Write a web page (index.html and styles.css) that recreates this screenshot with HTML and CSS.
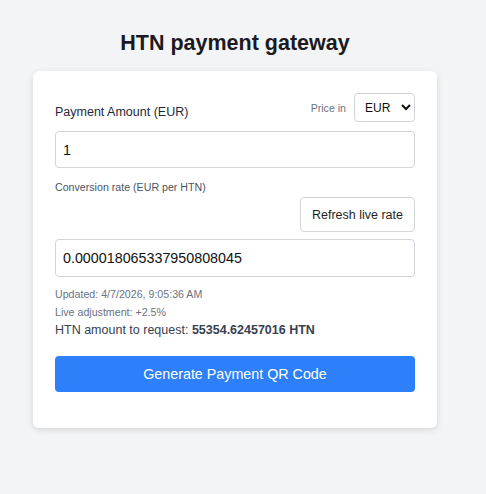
FILE: index.html
```html
<!DOCTYPE html>
<html lang="en">
<head>
<meta charset="utf-8">
<title>HTN payment gateway</title>
<link rel="stylesheet" href="styles.css">
</head>
<body>
<div class="page">
  <h1 class="title">HTN payment gateway</h1>
  <div class="card">
    <div class="head-row">
      <label class="field-label" for="amount">Payment Amount (EUR)</label>
      <div class="price-in">
        <span class="price-label">Price in</span>
        <select class="currency">
          <option>EUR</option>
          <option>USD</option>
        </select>
      </div>
    </div>
    <input id="amount" class="text-input" type="text" value="1">
    <div class="small-label">Conversion rate (EUR per HTN)</div>
    <div class="refresh-row">
      <button class="btn-outline" type="button">Refresh live rate</button>
    </div>
    <input class="text-input rate" type="text" value="0.000018065337950808045">
    <div class="meta">Updated: 4/7/2026, 9:05:36 AM</div>
    <div class="meta">Live adjustment: +2.5%</div>
    <div class="total">HTN amount to request: <strong>55354.62457016 HTN</strong></div>
    <button class="btn-primary" type="button">Generate Payment QR Code</button>
  </div>
</div>
</body>
</html>
```
FILE: styles.css
```css
* { box-sizing: border-box; }

html, body {
  margin: 0;
  background: #f3f4f6;
}

body {
  font-family: "Liberation Sans", Arial, sans-serif;
  color: #1f2937;
}

.page {
  width: 404px;
  margin-left: 33px;
  padding-top: 30px;
  padding-bottom: 40px;
}

.title {
  margin: 0 0 15px;
  font-size: 21.5px;
  line-height: 26px;
  font-weight: bold;
  text-align: center;
  color: #1b1b1f;
}

.card {
  background: #ffffff;
  border-radius: 6px;
  box-shadow: 0 2px 6px rgba(0, 0, 0, 0.12);
  padding: 22px 22px 36px;
}

.head-row {
  display: flex;
  justify-content: space-between;
  align-items: flex-end;
  height: 29px;
}

.field-label {
  font-size: 12.5px;
  line-height: 15px;
  margin-bottom: 2px;
  color: #1f2937;
}

.price-in {
  display: flex;
  align-items: center;
  gap: 8px;
}

.price-label {
  font-size: 10.6px;
  color: #6b7280;
}

.currency {
  width: 61px;
  height: 29px;
  font-family: "Liberation Sans", Arial, sans-serif;
  font-size: 12px;
  color: #111;
  background: #fff;
  border: 1px solid #d1d5db;
  border-radius: 4px;
  padding: 0 4px 0 6px;
}

.text-input {
  display: block;
  width: 100%;
  height: 37px;
  margin-top: 9px;
  padding: 0 7px;
  font-family: "Liberation Sans", Arial, sans-serif;
  font-size: 14.3px;
  color: #111;
  border: 1px solid #d1d5db;
  border-radius: 4px;
  background: #fff;
}

.text-input.rate {
  height: 38px;
  margin-top: 7px;
}

.small-label {
  margin-top: 12.5px;
  font-size: 10.65px;
  line-height: 13px;
  color: #4b5563;
}

.refresh-row {
  display: flex;
  justify-content: flex-end;
  margin-top: 3.5px;
}

.btn-outline {
  height: 35px;
  padding: 0 11px;
  font-family: "Liberation Sans", Arial, sans-serif;
  font-size: 12.5px;
  color: #1f1f1f;
  background: #fff;
  border: 1px solid #d1d5db;
  border-radius: 4px;
}

.meta {
  font-size: 10.65px;
  line-height: 18px;
  color: #6b7280;
}

.rate + .meta {
  margin-top: 7.5px;
}

.total {
  margin-top: 0.5px;
  font-size: 12.5px;
  line-height: 18px;
  color: #374151;
}

.total strong {
  font-weight: bold;
}

.btn-primary {
  display: block;
  width: 100%;
  height: 36px;
  margin-top: 17px;
  font-family: "Liberation Sans", Arial, sans-serif;
  font-size: 14.3px;
  color: #fff;
  background: #2e7ffa;
  border: none;
  border-radius: 4px;
}
```
